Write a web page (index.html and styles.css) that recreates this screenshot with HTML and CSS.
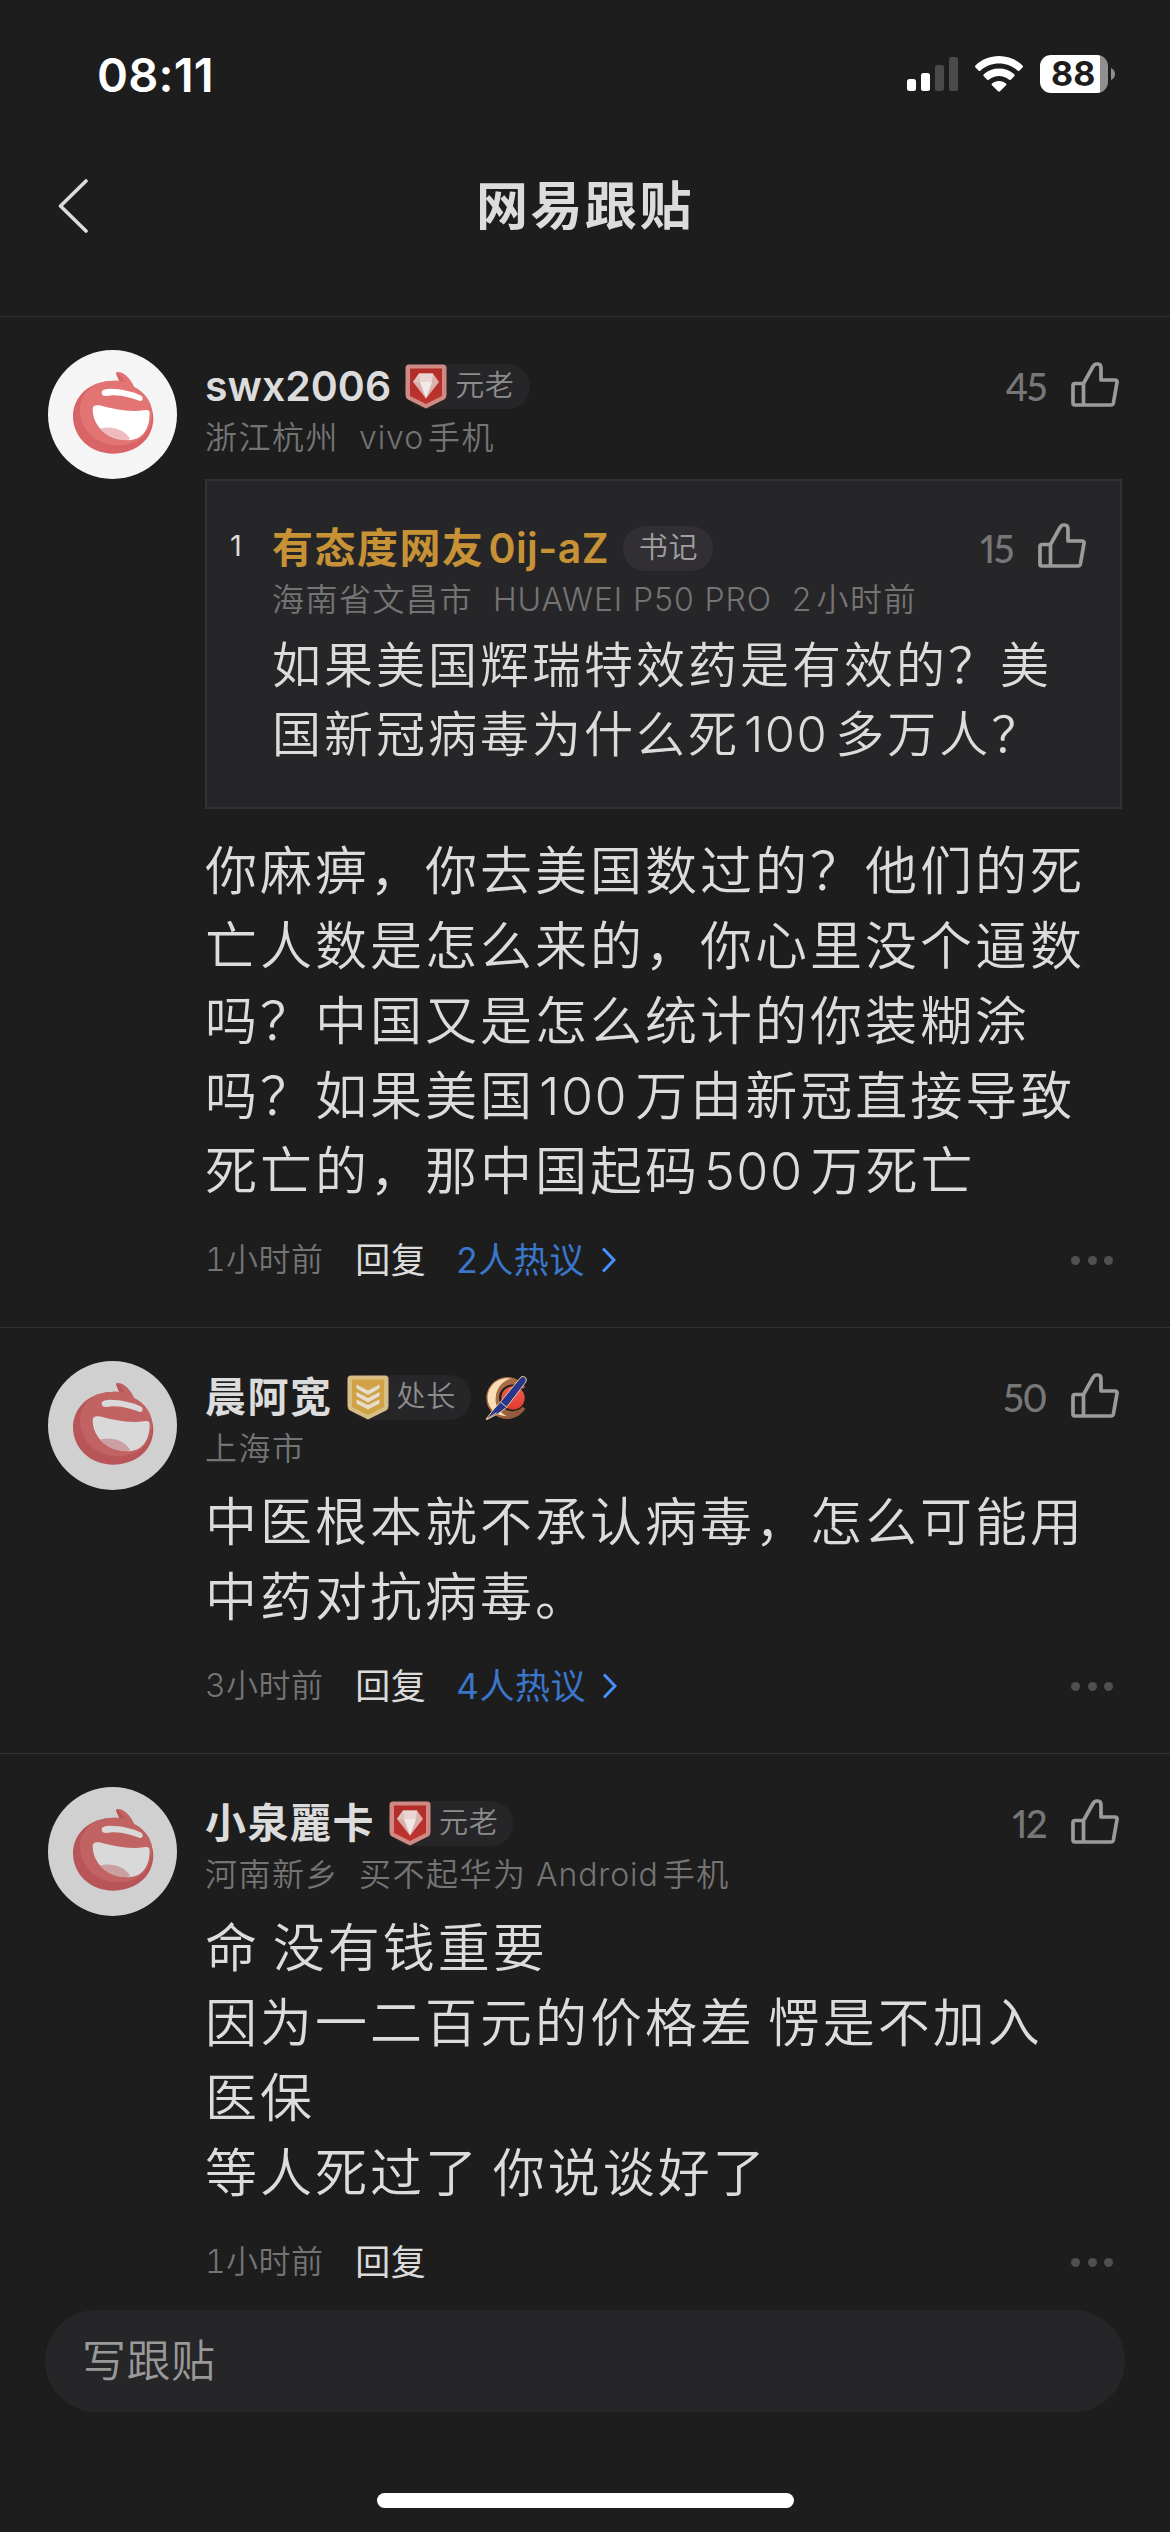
FILE: index.html
```html
<!DOCTYPE html>
<html lang="zh-CN">
<head>
<meta charset="utf-8">
<title>网易跟贴</title>
<link rel="stylesheet" href="styles.css">
</head>
<body>
<svg class="defs" width="0" height="0">
  <defs>
    <linearGradient id="gem-bg" x1="0" y1="0" x2="0" y2="1"><stop offset="0" stop-color="#b22c28"/><stop offset="1" stop-color="#bd3430"/></linearGradient>
    <linearGradient id="moon" x1="0" y1="0" x2="1" y2="1"><stop offset="0" stop-color="#b9774c"/><stop offset="1" stop-color="#8a5538"/></linearGradient>
    <linearGradient id="sun" x1="0" y1="0" x2="0" y2="1"><stop offset="0" stop-color="#f0604e"/><stop offset="1" stop-color="#e03a30"/></linearGradient>
    <symbol id="avatar" viewBox="12 12 387 387">
      <circle cx="205.500" cy="205.500" r="193.500" fill="#f5f5f5"/>
      <path d="M216 80C238 74 260 100 270 123C305 140 328 180 328 219C326 285 270 323 207 323C140 323 87 275 87 211C87 150 140 98 226 105C223 93 216 88 216 80Z" fill="#d96467"/>
      <path d="M226 105C218 90 219 82 219 79C240 78 260 100 270 123C305 140 324 170 325 202C322 262 285 299 218 298C150 296 108 245 108 190C108 135 160 98 226 105Z" fill="#e27573"/>
      <path d="M226 105C223 96 217 86 218 80C232 84 238 102 242 108Z" fill="#d76568"/>
      <path d="M173 140C173 132 180 129 196 128C234 128 272 138 292 149C299 155 296 165 288 165C264 157 238 147 205 148C187 150 173 153 173 140Z" fill="#fff"/>
      <path d="M146 190C146 179 153 176 166 178C215 192 261 199 304 192C313 191 317 194 317 202C317 245 299 282 253 283C190 283 146 240 146 190Z" fill="#fff"/>
      <path d="M168 248C198 239 239 247 259 279Q253 283 240 282C207 280 184 266 168 248Z" fill="#eebcc0"/>
    </symbol>
    <symbol id="thumb" viewBox="0 0 48 46">
      <path d="M12.500 21.500H4a2 2 0 0 0-2 2V41a2 2 0 0 0 2 2h36a2.500 2.500 0 0 0 2.400-2L46 20.500a2 2 0 0 0-2-2.500H30V6.500Q30 2 27 2H25.500Q23.500 2 22 4.500L12.500 21.500V43" fill="none" stroke="#9b9b9b" stroke-width="3.700" stroke-linejoin="round"/>
    </symbol>
    <symbol id="gem" viewBox="0 0 42 45">
      <path d="M4 .5H38Q41.500.5 41.500 4V31Q41.500 34 39 35.500L21 44.500L3 35.500Q.5 34 .5 31V4Q.5.5 4 .5Z" fill="#d08a84"/>
      <path d="M5 4.500H37V32L21 40L5 32Z" fill="url(#gem-bg)"/>
      <path d="M14 9.500H28L34 18L21 34.500L8 18Z" fill="#dcb0ad"/>
      <path d="M14 9.500H28L27 18H15Z" fill="#ead5d3"/>
      <path d="M15 18H27L21 34.500Z" fill="#f1e9e8"/>
      <path d="M8 18L14 9.500L15 18Z" fill="#dfc3c1"/>
    </symbol>
    <symbol id="rank" viewBox="0 0 42 45">
      <path d="M4 .5H38Q41.500.5 41.500 4V31Q41.500 34 39 35.500L21 44.500L3 35.500Q.5 34 .5 31V4Q.5.5 4 .5Z" fill="#d8bd84"/>
      <path d="M5 4.500H37V32L21 40L5 32Z" fill="#d0a245"/>
      <path d="M9.500 9.500L21 15.500L32.500 9.500V13.500L21 20L9.500 13.500Z M9.500 17L21 23L32.500 17V21L21 27.500L9.500 21Z M9.500 24.500L21 30L32.500 24.500V28.500L21 34.500L9.500 28.500Z" fill="#e6ddcc"/>
    </symbol>
  </defs>
</svg>

<header class="status">
  <span class="clock">08:11</span>
  <div class="indicators">
    <svg class="signal" viewBox="0 0 51 34"><rect y="22" width="9" height="12" rx="2.500" fill="#fff"/><rect x="14" y="16" width="9" height="18" rx="2.500" fill="#fff"/><rect x="28" y="8" width="9" height="26" rx="2.500" fill="#4a4a4a"/><rect x="42" width="9" height="34" rx="2.500" fill="#4a4a4a"/></svg>
    <svg class="wifi" viewBox="0 0 48 36" fill="#fff"><path d="M24 0C33 0 41.500 3.500 47.500 9.500Q48.500 10.500 47.500 11.500L44.500 14.500Q43.500 15.500 42.500 14.500C37 9.800 31 7.500 24 7.500S11 9.800 5.500 14.500Q4.500 15.500 3.500 14.500L.5 11.500Q-.5 10.500.5 9.500C6.500 3.500 15 0 24 0Z"/><path d="M24 12.500C30 12.500 35 14.500 39.200 18.300Q40.200 19.300 39.200 20.300L35.800 23.700Q34.900 24.500 33.800 23.600C31 21.300 27.500 20 24 20S17 21.300 14.200 23.600Q13.100 24.500 12.200 23.700L8.800 20.300Q7.800 19.300 8.800 18.300C13 14.500 18 12.500 24 12.500Z"/><path d="M24 25C27 25 29 26 31 27.600Q31.800 28.400 31 29.200L25 35.300Q24 36.200 23 35.300L17 29.200Q16.200 28.400 17 27.600C19 26 21 25 24 25Z"/></svg>
    <div class="battery"><span>88</span></div>
    <svg class="battery-tip" viewBox="0 0 4 12"><path d="M0 0Q4 2 4 6T0 12Z" fill="#8f8f8f"/></svg>
  </div>
</header>

<nav class="navbar">
  <svg class="back" viewBox="0 0 30 54"><path d="M28 2L2.500 27L28 52" fill="none" stroke="#dcdcdc" stroke-width="3.600" stroke-linecap="round" stroke-linejoin="round"/></svg>
  <h1>网易跟贴</h1>
</nav>

<main class="list">
  <article class="comment">
    <svg class="avatar"><use href="#avatar"/></svg>
    <div class="body">
      <div class="head">
        <span class="name latin">swx2006</span>
        <span class="badge"><svg><use href="#gem"/></svg>元老</span>
        <span class="like">45<svg><use href="#thumb"/></svg></span>
      </div>
      <div class="meta"><span>浙江杭州</span><span><i>vivo</i>手机</span></div>
      <section class="quote">
        <span class="floor">1</span>
        <div class="quote-body">
          <div class="head">
            <span class="name gold">有态度网友<i>0ij-aZ</i></span>
            <span class="badge plain">书记</span>
            <span class="like">15<svg><use href="#thumb"/></svg></span>
          </div>
          <div class="meta"><span>海南省文昌市</span><span class="device">HUAWEI P50 PRO</span><span><i>2</i>小时前</span></div>
          <p class="quote-text">如果美国辉瑞特效药是有效的？美<br>国新冠病毒为什么死<i>100</i>多万人？</p>
        </div>
      </section>
      <p class="text after-quote">你麻痹，你去美国数过的？他们的死<br>亡人数是怎么来的，你心里没个逼数<br>吗？中国又是怎么统计的你装糊涂<br>吗？如果美国<i>100</i>万由新冠直接导致<br>死亡的，那中国起码<i>500</i>万死亡</p>
      <footer class="actions">
        <time>1小时前</time><span class="reply">回复</span>
        <span class="thread">2人热议<svg viewBox="0 0 15 26"><path d="M2 1.500L13 13L2 24.500"/></svg></span>
        <span class="more"><b></b><b></b><b></b></span>
      </footer>
    </div>
  </article>

  <article class="comment">
    <svg class="avatar dim"><use href="#avatar"/></svg>
    <div class="body">
      <div class="head">
        <span class="name">晨阿宽</span>
        <span class="badge"><svg><use href="#rank"/></svg>处长</span>
        <svg class="medal" viewBox="0 0 126 132">
          <path d="M121 98A63 63 0 1 1 121 34L112 39A40 40 0 1 0 112 92Z" fill="url(#moon)"/>
          <path d="M80 7C30 2 8 36 8 66C8 96 32 120 66 121C40 107 30 88 32 66C33 38 52 14 80 7Z" fill="#f8dfb8"/>
          <circle cx="84" cy="66" r="35" fill="url(#sun)"/>
          <path d="M108 3Q115-2 122 5Q127 12 121 20L64 95L38 114L5 131L4 128L28 98L46 78Z" fill="#28358c" stroke="#ecc996" stroke-width="3"/>
          <path d="M46 78L66 94M4 130L35 110" fill="none" stroke="#ecc996" stroke-width="3"/>
        </svg>
        <span class="like">50<svg><use href="#thumb"/></svg></span>
      </div>
      <div class="meta"><span>上海市</span></div>
      <p class="text">中医根本就不承认病毒，怎么可能用<br>中药对抗病毒。</p>
      <footer class="actions">
        <time>3小时前</time><span class="reply">回复</span>
        <span class="thread">4人热议<svg viewBox="0 0 15 26"><path d="M2 1.500L13 13L2 24.500"/></svg></span>
        <span class="more"><b></b><b></b><b></b></span>
      </footer>
    </div>
  </article>

  <article class="comment">
    <svg class="avatar dim"><use href="#avatar"/></svg>
    <div class="body">
      <div class="head">
        <span class="name">小泉麗卡</span>
        <span class="badge"><svg><use href="#gem"/></svg>元老</span>
        <span class="like">12<svg><use href="#thumb"/></svg></span>
      </div>
      <div class="meta"><span>河南新乡</span><span>买不起华为 <i>Android</i>手机</span></div>
      <p class="text">命 没有钱重要<br>因为一二百元的价格差 愣是不加入<br>医保<br>等人死过了 你说谈好了</p>
      <footer class="actions">
        <time>1小时前</time><span class="reply">回复</span>
        <span class="more"><b></b><b></b><b></b></span>
      </footer>
    </div>
  </article>
</main>

<div class="composer">写跟贴</div>
<div class="home"></div>
</body>
</html>
```
FILE: styles.css
```css
* { box-sizing: border-box; }
body {
  margin: 0;
  width: 1170px;
  height: 2532px;
  overflow: hidden;
  display: flex;
  flex-direction: column;
  background: #1d1d1d;
  color: #dcdcdc;
  font-family: Inter, "Noto Sans CJK SC", sans-serif;
  white-space: nowrap;
}
i { font-style: normal; }
p, h1 { margin: 0; }
svg { display: block; flex: none; }
.defs { position: absolute; }

.status {
  height: 148px;
  flex: none;
  display: flex;
  justify-content: space-between;
  padding: 0 55px 0 97px;
}
.clock { font-size: 47px; font-weight: 600; line-height: 149px; letter-spacing: .2px; color: #fff; }
.indicators { display: flex; align-items: center; }
.signal { width: 51px; height: 34px; margin-right: 17px; }
.wifi { width: 48px; height: 36px; margin-right: 17px; }
.battery {
  width: 68px;
  height: 38px;
  border-radius: 11px;
  background: linear-gradient(90deg, #fff 60px, #8f8f8f 60px);
  color: #1d1d1d;
  font: 700 34px/38px Inter, sans-serif;
  padding-left: 11px;
}
.battery-tip { width: 4px; height: 12px; margin-left: 3px; }

.navbar {
  height: 169px;
  flex: none;
  display: grid;
  grid-template-columns: 200px 1fr 200px;
  align-items: start;
  border-bottom: 1px solid #333;
}
.back { width: 30px; height: 54px; margin: 31px 0 0 58px; }
h1 {
  text-align: center;
  font-size: 52px;
  line-height: 60px;
  font-weight: 600;
  letter-spacing: 2.500px;
  margin-top: 29px;
}

.list { flex: none; height: 1993px; overflow: hidden; }
.comment { display: flex; gap: 28px; padding: 33px 48px 0; border-bottom: 1px solid #333; }
.comment:last-child { border-bottom: 0; }
.avatar { width: 129px; height: 129px; }
.dim { filter: brightness(.85); }
.body { flex: 1; padding: 14px 0 44px; }
.head { display: flex; align-items: center; height: 45px; }
.name { font-size: 41px; line-height: 45px; font-weight: 600; letter-spacing: 1.500px; }
.latin { letter-spacing: 0; }
.gold { color: #c79236; }
.gold i { margin-left: 4px; letter-spacing: .4px; }
.badge {
  display: flex;
  align-items: flex-start;
  height: 45px;
  line-height: 44px;
  margin-left: 14px;
  padding-right: 15px;
  border-radius: 22px;
  background: #262628;
  color: #8c8c8c;
  font-size: 29px;
  letter-spacing: .7px;
  font-weight: 350;
}
.badge svg { width: 42px; height: 45px; margin-right: 8px; }
.plain { background: #312f34; color: #a0a0a0; padding-left: 16px; }
.medal { width: 42px; height: 44px; margin-left: 14px; }
.like {
  margin-left: auto;
  padding-right: 3px;
  display: flex;
  align-items: center;
  gap: 25px;
  font: 500 38px/45px Lato, sans-serif;
  font-variant-numeric: proportional-nums;
  letter-spacing: -1.500px;
  color: #777;
}
.like svg { width: 48px; height: 46px; margin-top: -4px; }
.quote .like svg { margin-top: -6px; }
.meta {
  display: flex;
  gap: 20px;
  margin-top: 7px;
  margin-bottom: -1px;
  font-size: 32px;
  line-height: 44px;
  font-weight: 350;
  letter-spacing: 1.500px;
  word-spacing: -1px;
  color: #747474;
}
.meta i { letter-spacing: .9px; margin-right: 4px; }
.meta .device { letter-spacing: .9px; word-spacing: 0; }
.quote {
  display: flex;
  height: 330px;
  margin-top: 20px;
  padding: 45px 31px 0 23px;
  border: 2px solid #323234;
  background: #262628;
}
.floor { width: 42px; font-size: 29px; line-height: 40px; }
.quote-body { flex: 1; }
.quote-text { margin-top: 10px; font-size: 49px; line-height: 69px; letter-spacing: 3px; font-weight: 350; }
.text { margin-top: 15px; font-size: 52px; line-height: 75px; letter-spacing: 3px; word-spacing: -5px; font-weight: 350; }
.after-quote { margin-top: 25px; }
.text i, .quote-text i { letter-spacing: 1.500px; margin: 0 7px 0 4px; }

.actions { display: flex; align-items: center; height: 46px; margin-top: 28px; line-height: 46px; }
time { font-size: 32px; font-weight: 350; letter-spacing: .4px; color: #747474; font-variant-numeric: tabular-nums; }
.reply { margin-left: 32px; font-size: 35px; letter-spacing: .5px; }
.thread {
  display: flex;
  align-items: center;
  gap: 16px;
  margin-left: 30px;
  font-size: 35px;
  letter-spacing: .5px;
  color: #3a76ca;
}
.thread svg { width: 15px; height: 26px; fill: none; stroke: #4590fa; stroke-width: 3; }
.more { display: flex; gap: 7.500px; margin-left: auto; margin-right: 9px; }
.more b { width: 9px; height: 9px; border-radius: 50%; background: #505050; }

.composer {
  flex: none;
  width: 1080px;
  height: 102px;
  margin-left: 45px;
  padding-left: 37px;
  border-radius: 51px;
  background: #262628;
  color: #999;
  font-size: 44px;
  line-height: 102px;
  font-weight: 350;
  letter-spacing: .5px;
}
.home { flex: none; width: 417px; height: 15px; margin: 81px auto 0; border-radius: 8px; background: #fff; }
```
